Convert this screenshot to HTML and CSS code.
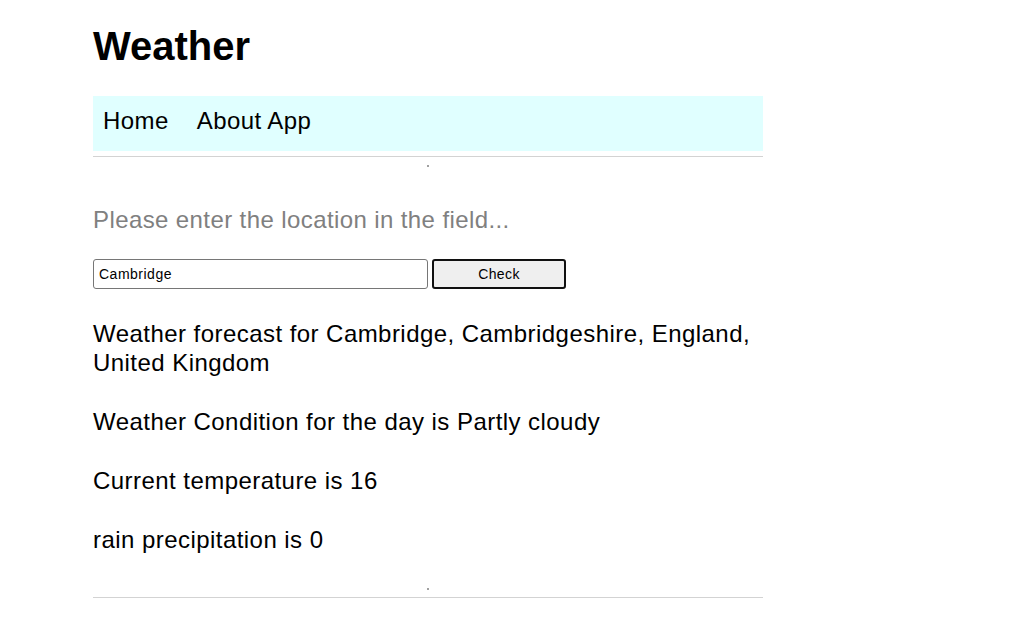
FILE: index.html
```html
<!DOCTYPE html>
<html lang="en">
<head>
<meta charset="utf-8">
<title>Weather</title>
<link rel="stylesheet" href="styles.css">
</head>
<body>
<div class="page">
  <h1 class="title">Weather</h1>
  <nav class="nav">
    <a class="nav-link" href="#">Home</a>
    <a class="nav-link" href="#">About App</a>
  </nav>
  <div class="rule"></div>
  <div class="dot"></div>
  <p class="prompt">Please enter the location in the field...</p>
  <form class="search">
    <input class="search-input" type="text" value="Cambridge">
    <button class="search-btn" type="button">Check</button>
  </form>
  <div class="results">
    <p class="result">Weather forecast for Cambridge, Cambridgeshire, England, United Kingdom</p>
    <p class="result">Weather Condition for the day is Partly cloudy</p>
    <p class="result">Current temperature is 16</p>
    <p class="result">rain precipitation is 0</p>
  </div>
  <div class="dot dot-bottom"></div>
  <div class="rule rule-bottom"></div>
</div>
</body>
</html>
```
FILE: styles.css
```css
html, body {
  margin: 0;
  background: #fff;
}
body {
  font-family: "Liberation Sans", Arial, sans-serif;
  color: #000;
}
.page {
  width: 670px;
  margin-left: 93px;
  padding-top: 23px;
  display: flex;
  flex-direction: column;
}
.title {
  font-size: 40px;
  line-height: 46px;
  font-weight: bold;
  margin: 0 0 27px;
}
.nav {
  box-sizing: border-box;
  height: 55px;
  background: #e0ffff;
  display: flex;
  gap: 28px;
  padding: 11px 10px 0;
  font-size: 24px;
  letter-spacing: 0.42px;
}
.nav-link {
  color: #000;
  text-decoration: none;
}
.rule {
  border-top: 1px solid #d3d3d3;
  margin-top: 5px;
  height: 0;
}
.dot {
  width: 2px;
  height: 2px;
  background: #a0a0a0;
  align-self: center;
  margin-top: 8px;
}
.prompt {
  margin: 39px 0 0;
  font-size: 24px;
  letter-spacing: 0.4px;
  color: #808080;
}
.search {
  margin: 25px 0 0;
  display: flex;
  gap: 4px;
  height: 30px;
}
.search-input {
  box-sizing: border-box;
  width: 335px;
  height: 30px;
  border: 1px solid #767676;
  border-radius: 3px;
  padding: 0 5px 1px;
  font-family: "Liberation Sans", Arial, sans-serif;
  font-size: 14px;
  letter-spacing: 0.5px;
  color: #000;
}
.search-btn {
  box-sizing: border-box;
  width: 134px;
  height: 30px;
  border: 2px solid #101010;
  border-radius: 3px;
  background: #efefef;
  font-family: "Liberation Sans", Arial, sans-serif;
  font-size: 14px;
  letter-spacing: 0.4px;
  color: #000;
  padding: 0 0 1px;
}
.results {
  margin-top: 30px;
  display: flex;
  flex-direction: column;
  gap: 30px;
}
.result {
  margin: 0;
  font-size: 24px;
  line-height: 29px;
  letter-spacing: 0.45px;
}
.dot-bottom {
  margin-top: 34px;
}
.rule-bottom {
  margin-top: 7px;
}
```
